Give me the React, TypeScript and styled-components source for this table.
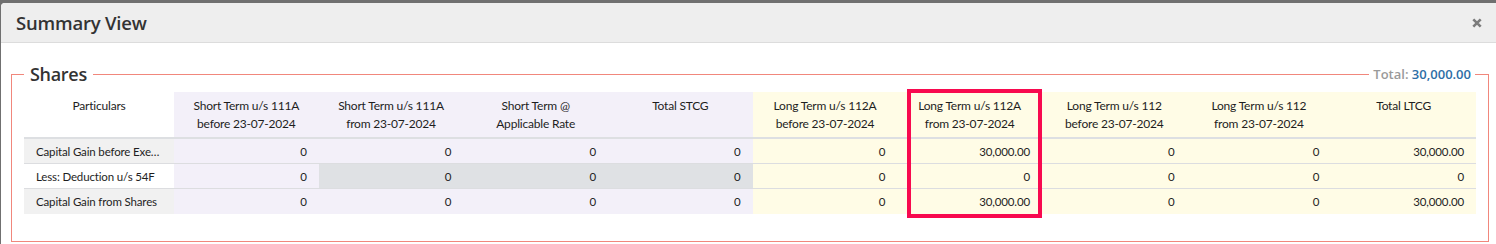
import React from 'react';
import styled, { createGlobalStyle } from 'styled-components';

const GlobalStyle = createGlobalStyle`
  html, body { margin: 0; padding: 0; height: 100%; }
  body {
    background: #707070;
    font-family: Lato, "Noto Sans", sans-serif;
    color: #333;
    overflow: hidden;
  }
  #root { padding: 3px 0 0 1px; height: 100%; box-sizing: border-box; }
`;

type Tone = 'plain' | 'short' | 'long';

const toneBg: Record<Tone, string> = {
  plain: '#ffffff',
  short: '#f3f0f9',
  long: '#fffce6',
};

const Modal = styled.div`
  background: #fff;
  height: 100%;
  border-top-left-radius: 4px;
  overflow: hidden;
`;

const Header = styled.div`
  height: 39px;
  background: #eeeeee;
  border-bottom: 1px solid #dcdcdc;
  display: flex;
  align-items: center;
  justify-content: space-between;
  padding: 0 14px 0 15px;
`;

const Title = styled.h4`
  margin: 0;
  font-family: "Open Sans", sans-serif;
  font-size: 18.5px;
  letter-spacing: -0.2px;
  font-weight: 600;
  color: #333;
`;

const Close = styled.button`
  background: none;
  border: 0;
  padding: 0;
  width: 10px;
  height: 10px;
  display: flex;
  color: #7c7c7c;
  cursor: pointer;
`;

const Body = styled.div`
  padding: 31px 7px 0 10px;
`;

const Panel = styled.section`
  position: relative;
  border: 1px solid #f1877c;
  padding: 17px 12px 27px;
`;

const Legend = styled.h3`
  position: absolute;
  left: 12px;
  top: -13px;
  margin: 0;
  padding: 0 6px;
  background: #fff;
  font-family: "Open Sans", sans-serif;
  font-size: 18px;
  letter-spacing: -0.3px;
  font-weight: 600;
  line-height: 24px;
  color: #333;
`;

const Total = styled.div`
  position: absolute;
  right: 13px;
  top: -10px;
  padding: 0 4px;
  background: #fff;
  font-family: "Open Sans", sans-serif;
  font-size: 13px;
  font-weight: 600;
  line-height: 18px;
  color: #9a9a9a;
`;

const TotalValue = styled.span`
  color: #2d6ea6;
`;

const TableWrap = styled.div`
  position: relative;
`;

const Table = styled.table`
  width: 100%;
  table-layout: fixed;
  border-collapse: separate;
  border-spacing: 0;
  font-size: 11.5px;
  letter-spacing: -0.15px;
`;

const Th = styled.th<{ $tone: Tone }>`
  background: ${(p) => toneBg[p.$tone]};
  height: 36px;
  padding: 5px 6px 4px;
  font-size: 12px;
  letter-spacing: -0.2px;
  font-weight: 400;
  line-height: 18px;
  color: #1e1e1e;
  text-align: center;
  vertical-align: top;
  border-bottom: 2px solid #dddfe2;
`;

const Label = styled.td<{ $shaded: boolean }>`
  background: ${(p) => (p.$shaded ? '#f1f1f1' : '#ffffff')};
  height: 24px;
  padding: 0 6px 0 12px;
  color: #1e1e1e;
  white-space: nowrap;
  overflow: hidden;
  text-overflow: ellipsis;
  border-bottom: 1px solid #dcdde0;
`;

const Cell = styled.td<{ $tone: Tone; $disabled: boolean }>`
  background: ${(p) => (p.$disabled ? '#dfe1e4' : toneBg[p.$tone])};
  height: 24px;
  padding: 0 12px;
  text-align: right;
  color: #1e1e1e;
  white-space: nowrap;
  border-bottom: 1px solid #dcdde0;
`;

const Row = styled.tr`
  &:last-child td {
    border-bottom-color: transparent;
  }
`;

const Highlight = styled.div`
  position: absolute;
  left: 883px;
  top: -3px;
  width: 135px;
  height: 129px;
  box-sizing: border-box;
  border: 4px solid #f8094f;
  pointer-events: none;
`;

const columns: { lines: [string, string?]; tone: Tone }[] = [
  { lines: ['Short Term u/s 111A', 'before 23-07-2024'], tone: 'short' },
  { lines: ['Short Term u/s 111A', 'from 23-07-2024'], tone: 'short' },
  { lines: ['Short Term @', 'Applicable Rate'], tone: 'short' },
  { lines: ['Total STCG'], tone: 'short' },
  { lines: ['Long Term u/s 112A', 'before 23-07-2024'], tone: 'long' },
  { lines: ['Long Term u/s 112A', 'from 23-07-2024'], tone: 'long' },
  { lines: ['Long Term u/s 112', 'before 23-07-2024'], tone: 'long' },
  { lines: ['Long Term u/s 112', 'from 23-07-2024'], tone: 'long' },
  { lines: ['Total LTCG'], tone: 'long' },
];

const rows: { label: string; shaded: boolean; values: string[]; disabled: number[] }[] = [
  {
    label: 'Capital Gain before Exemption',
    shaded: true,
    values: ['0', '0', '0', '0', '0', '30,000.00', '0', '0', '30,000.00'],
    disabled: [],
  },
  {
    label: 'Less: Deduction u/s 54F',
    shaded: false,
    values: ['0', '0', '0', '0', '0', '0', '0', '0', '0'],
    disabled: [1, 2, 3],
  },
  {
    label: 'Capital Gain from Shares',
    shaded: true,
    values: ['0', '0', '0', '0', '0', '30,000.00', '0', '0', '30,000.00'],
    disabled: [],
  },
];

const CloseIcon = () => (
  <svg width="10" height="10" viewBox="0 0 10 10" aria-hidden="true">
    <path d="M1.3 1.3 L8.7 8.7 M8.7 1.3 L1.3 8.7" stroke="currentColor" strokeWidth="2.6" strokeLinecap="butt" fill="none" />
  </svg>
);

export default function App() {
  return (
    <>
      <GlobalStyle />
      <Modal>
        <Header>
          <Title>Summary View</Title>
          <Close aria-label="Close">
            <CloseIcon />
          </Close>
        </Header>
        <Body>
          <Panel>
            <Legend>Shares</Legend>
            <Total>
              Total: <TotalValue>30,000.00</TotalValue>
            </Total>
            <TableWrap>
              <Table>
                <colgroup>
                  <col style={{ width: 150 }} />
                  {columns.map((_, i) => (
                    <col key={i} />
                  ))}
                </colgroup>
                <thead>
                  <tr>
                    <Th $tone="plain">Particulars</Th>
                    {columns.map((c, i) => (
                      <Th key={i} $tone={c.tone}>
                        {c.lines[0]}
                        {c.lines[1] && (
                          <>
                            <br />
                            {c.lines[1]}
                          </>
                        )}
                      </Th>
                    ))}
                  </tr>
                </thead>
                <tbody>
                  {rows.map((r, ri) => (
                    <Row key={ri}>
                      <Label $shaded={r.shaded}>{r.label}</Label>
                      {r.values.map((v, ci) => (
                        <Cell key={ci} $tone={columns[ci].tone} $disabled={r.disabled.includes(ci)}>
                          {v}
                        </Cell>
                      ))}
                    </Row>
                  ))}
                </tbody>
              </Table>
              <Highlight />
            </TableWrap>
          </Panel>
        </Body>
      </Modal>
    </>
  );
}
